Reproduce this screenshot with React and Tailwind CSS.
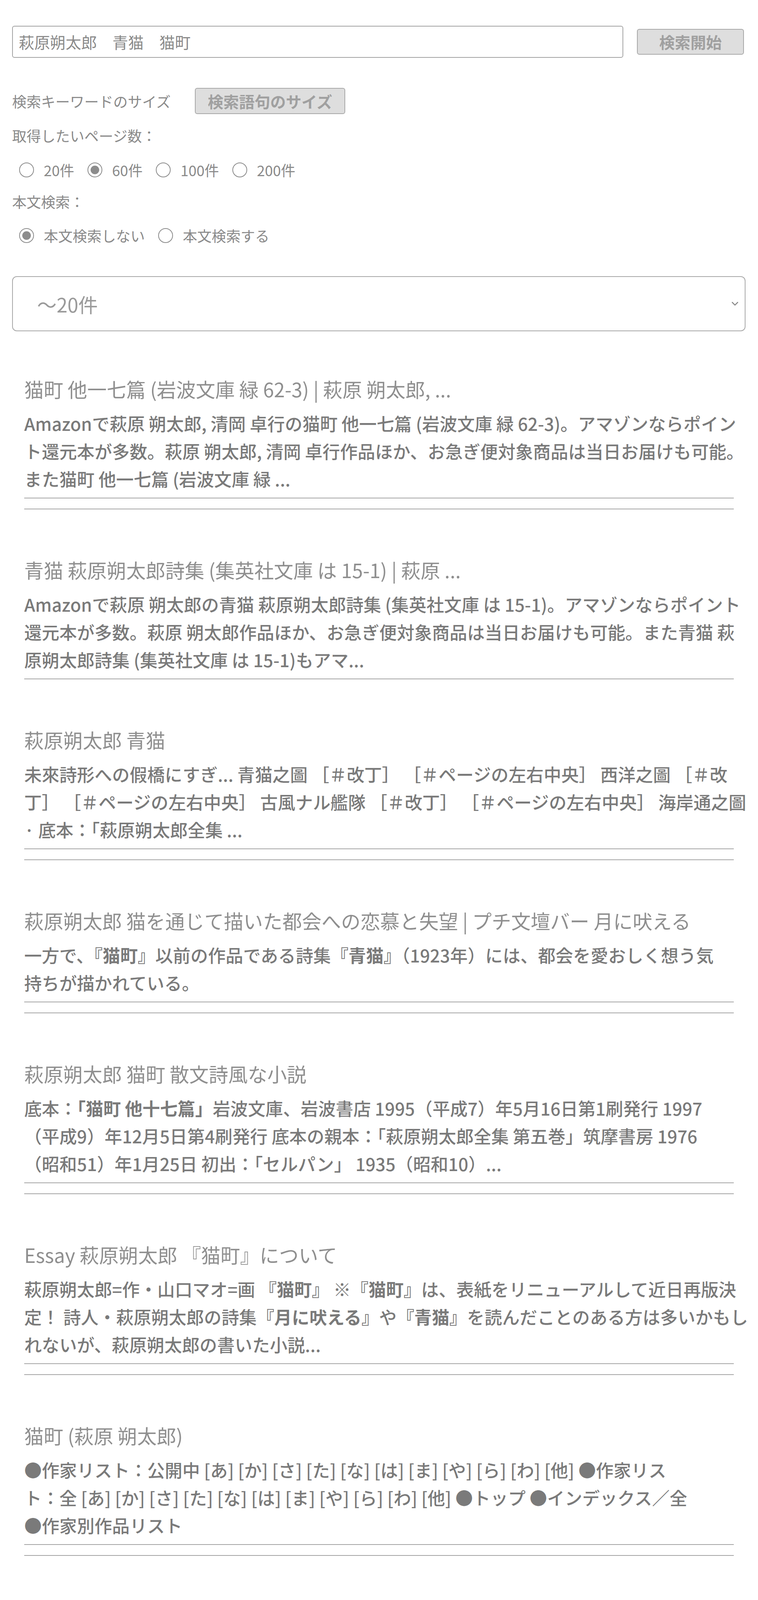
import React from "react";

const results = [
  {
    title: "猫町 他一七篇 (岩波文庫 緑 62-3) | 萩原 朔太郎, ...",
    lines: [
      "Amazonで萩原 朔太郎, 清岡 卓行の猫町 他一七篇 (岩波文庫 緑 62-3)。アマゾンならポイン",
      "ト還元本が多数。萩原 朔太郎, 清岡 卓行作品ほか、お急ぎ便対象商品は当日お届けも可能。",
      "また猫町 他一七篇 (岩波文庫 緑 ...",
    ],
    hrs: 2,
  },
  {
    title: "青猫 萩原朔太郎詩集 (集英社文庫 は 15-1) | 萩原 ...",
    lines: [
      "Amazonで萩原 朔太郎の青猫 萩原朔太郎詩集 (集英社文庫 は 15-1)。アマゾンならポイント",
      "還元本が多数。萩原 朔太郎作品ほか、お急ぎ便対象商品は当日お届けも可能。また青猫 萩",
      "原朔太郎詩集 (集英社文庫 は 15-1)もアマ...",
    ],
    hrs: 1,
  },
  {
    title: "萩原朔太郎 青猫",
    lines: [
      "未來詩形への假橋にすぎ... 青猫之圖 ［＃改丁］ ［＃ページの左右中央］ 西洋之圖 ［＃改",
      "丁］ ［＃ページの左右中央］ 古風ナル艦隊 ［＃改丁］ ［＃ページの左右中央］ 海岸通之圖",
      "· 底本：「萩原朔太郎全集 ...",
    ],
    hrs: 2,
  },
  {
    title: "萩原朔太郎 猫を通じて描いた都会への恋慕と失望 | プチ文壇バー 月に吠える",
    lines: [
      "一方で、**『猫町』**以前の作品である詩集**『青猫』**（1923年）には、都会を愛おしく想う気",
      "持ちが描かれている。",
    ],
    hrs: 2,
  },
  {
    title: "萩原朔太郎 猫町 散文詩風な小説",
    lines: [
      "底本：**「猫町 他十七篇」**岩波文庫、岩波書店 1995（平成7）年5月16日第1刷発行 1997",
      "（平成9）年12月5日第4刷発行 底本の親本：「萩原朔太郎全集 第五巻」筑摩書房 1976",
      "（昭和51）年1月25日 初出：「セルパン」 1935（昭和10）...",
    ],
    hrs: 2,
  },
  {
    title: "Essay 萩原朔太郎 『猫町』について",
    lines: [
      "萩原朔太郎=作・山口マオ=画 **『猫町』** ※**『猫町』**は、表紙をリニューアルして近日再版決",
      "定！ 詩人・萩原朔太郎の詩集**『月に吠える』**や**『青猫』**を読んだことのある方は多いかもし",
      "れないが、萩原朔太郎の書いた小説...",
    ],
    hrs: 2,
  },
  {
    title: "猫町 (萩原 朔太郎)",
    lines: [
      "●作家リスト：公開中 [あ] [か] [さ] [た] [な] [は] [ま] [や] [ら] [わ] [他] ●作家リス",
      "ト：全 [あ] [か] [さ] [た] [な] [は] [ま] [や] [ら] [わ] [他] ●トップ ●インデックス／全",
      "●作家別作品リスト",
    ],
    hrs: 2,
  },
  {
    title: "猫町 | 萩原 朔太郎, 金井田 英津子 |本 | 通販 | Amazon",
    lines: [
      "Amazonで萩原 朔太郎, 金井田 英津子の猫町。アマゾンならポイント還元本が多数。萩原 朔",
      "太郎, 金井田 英津子作品ほか、お急ぎ便対象商品は当日お届けも可能。また猫町もアマゾン",
      "配送商品なら通常配送無料。",
    ],
    hrs: 2,
  },
  {
    title: "萩原朔太郎 - Wikipedia",
    lines: [
      "**『萩原朔太郎の人生読本』**辻野久憲編、ちくま文庫、1994 · **『猫町 他十七篇』**清岡卓行",
      "編、岩波文庫、1995",
    ],
    hrs: 2,
  },
];

function Line({ text }) {
  const parts = text.split("**");
  return (
    <div className="whitespace-nowrap leading-[71px] h-[71px]">
      {parts.map((p, i) =>
        i % 2 === 1 ? (
          <b key={i} className="font-bold">
            {p}
          </b>
        ) : (
          <span key={i}>{p}</span>
        )
      )}
    </div>
  );
}

function Radio({ checked }) {
  return (
    <span className="w-[38px] h-[38px] rounded-full border-2 border-[#8c8c8c] flex items-center justify-center shrink-0">
      {checked && <span className="w-[22px] h-[22px] rounded-full bg-[#8c8c8c]" />}
    </span>
  );
}

function RadioItem({ checked, label }) {
  return (
    <div className="flex items-center mr-[34px]">
      <Radio checked={checked} />
      <span className="ml-[25px] text-[37px] leading-[50px] text-[#8a8a8a] whitespace-nowrap">{label}</span>
    </div>
  );
}

export default function App() {
  return (
    <div className="h-[4900px] overflow-hidden bg-white font-['Noto_Sans_CJK_JP','Noto_Sans',sans-serif] text-[#8a8a8a]">
      <div className="pl-[31px] pt-[66px]">
        <div className="flex items-center">
          <div className="w-[1565px] h-[82px] border-2 border-[#a3a3a3] rounded-[6px] flex items-center pl-[15px] text-[40px] text-[#8a8a8a] whitespace-nowrap">
            萩原朔太郎　青猫　猫町
          </div>
          <div className="ml-[35px] w-[274px] h-[66px] bg-[#dedede] border-2 border-[#a8a8a8] rounded-[6px] flex items-center justify-center text-[40px] font-bold text-[#a0a0a0]">
            検索開始
          </div>
        </div>

        <div className="mt-[77px] flex items-center h-[67px]">
          <span className="text-[37px] leading-[50px] whitespace-nowrap">検索キーワードのサイズ</span>
          <div className="ml-[62px] w-[385px] h-[67px] bg-[#dedede] border-2 border-[#a8a8a8] rounded-[6px] flex items-center justify-center text-[40px] font-bold text-[#a0a0a0] whitespace-nowrap">
            検索語句のサイズ
          </div>
        </div>

        <div className="mt-[30px] text-[37px] leading-[50px] h-[50px]">取得したいページ数：</div>

        <div className="mt-[38px] h-[50px] flex items-center pl-[18px]">
          <RadioItem label="20件" />
          <RadioItem label="60件" checked />
          <RadioItem label="100件" />
          <RadioItem label="200件" />
        </div>

        <div className="mt-[31px] text-[37px] leading-[50px] h-[50px]">本文検索：</div>

        <div className="mt-[37px] h-[50px] flex items-center pl-[18px]">
          <RadioItem label="本文検索しない" checked />
          <RadioItem label="本文検索する" />
        </div>

        <div className="mt-[79px] w-[1878px] h-[141px] border-2 border-[#a8a8a8] rounded-[12px] flex items-center justify-between pl-[62px] pr-[16px]">
          <span className="text-[50px] text-[#9a9a9a] leading-[60px]">～20件</span>
          <svg width="18" height="12" viewBox="0 0 18 12" className="shrink-0">
            <path d="M2 2 L9 9 L16 2" fill="none" stroke="#8a8a8a" strokeWidth="2.5" strokeLinecap="round" strokeLinejoin="round" />
          </svg>
        </div>
      </div>

      <div className="px-[62px] pt-[117px]">
        {results.map((r, idx) => (
          <div key={idx} className={idx === 0 ? "" : "mt-[124px]"}>
            <div className="text-[50px] leading-[60px] h-[60px] whitespace-nowrap text-[#8f8f8f]">{r.title}</div>
            <div className="mt-[23px] text-[45px] font-medium text-[#7a7a7a]">
              {r.lines.map((l, i) => (
                <Line key={i} text={l} />
              ))}
            </div>
            <div className="mt-[13px] h-[2px] bg-[#a5a5a5]" />
            {r.hrs === 2 && <div className="mt-[26px] h-[2px] bg-[#a5a5a5]" />}
          </div>
        ))}
      </div>
    </div>
  );
}
